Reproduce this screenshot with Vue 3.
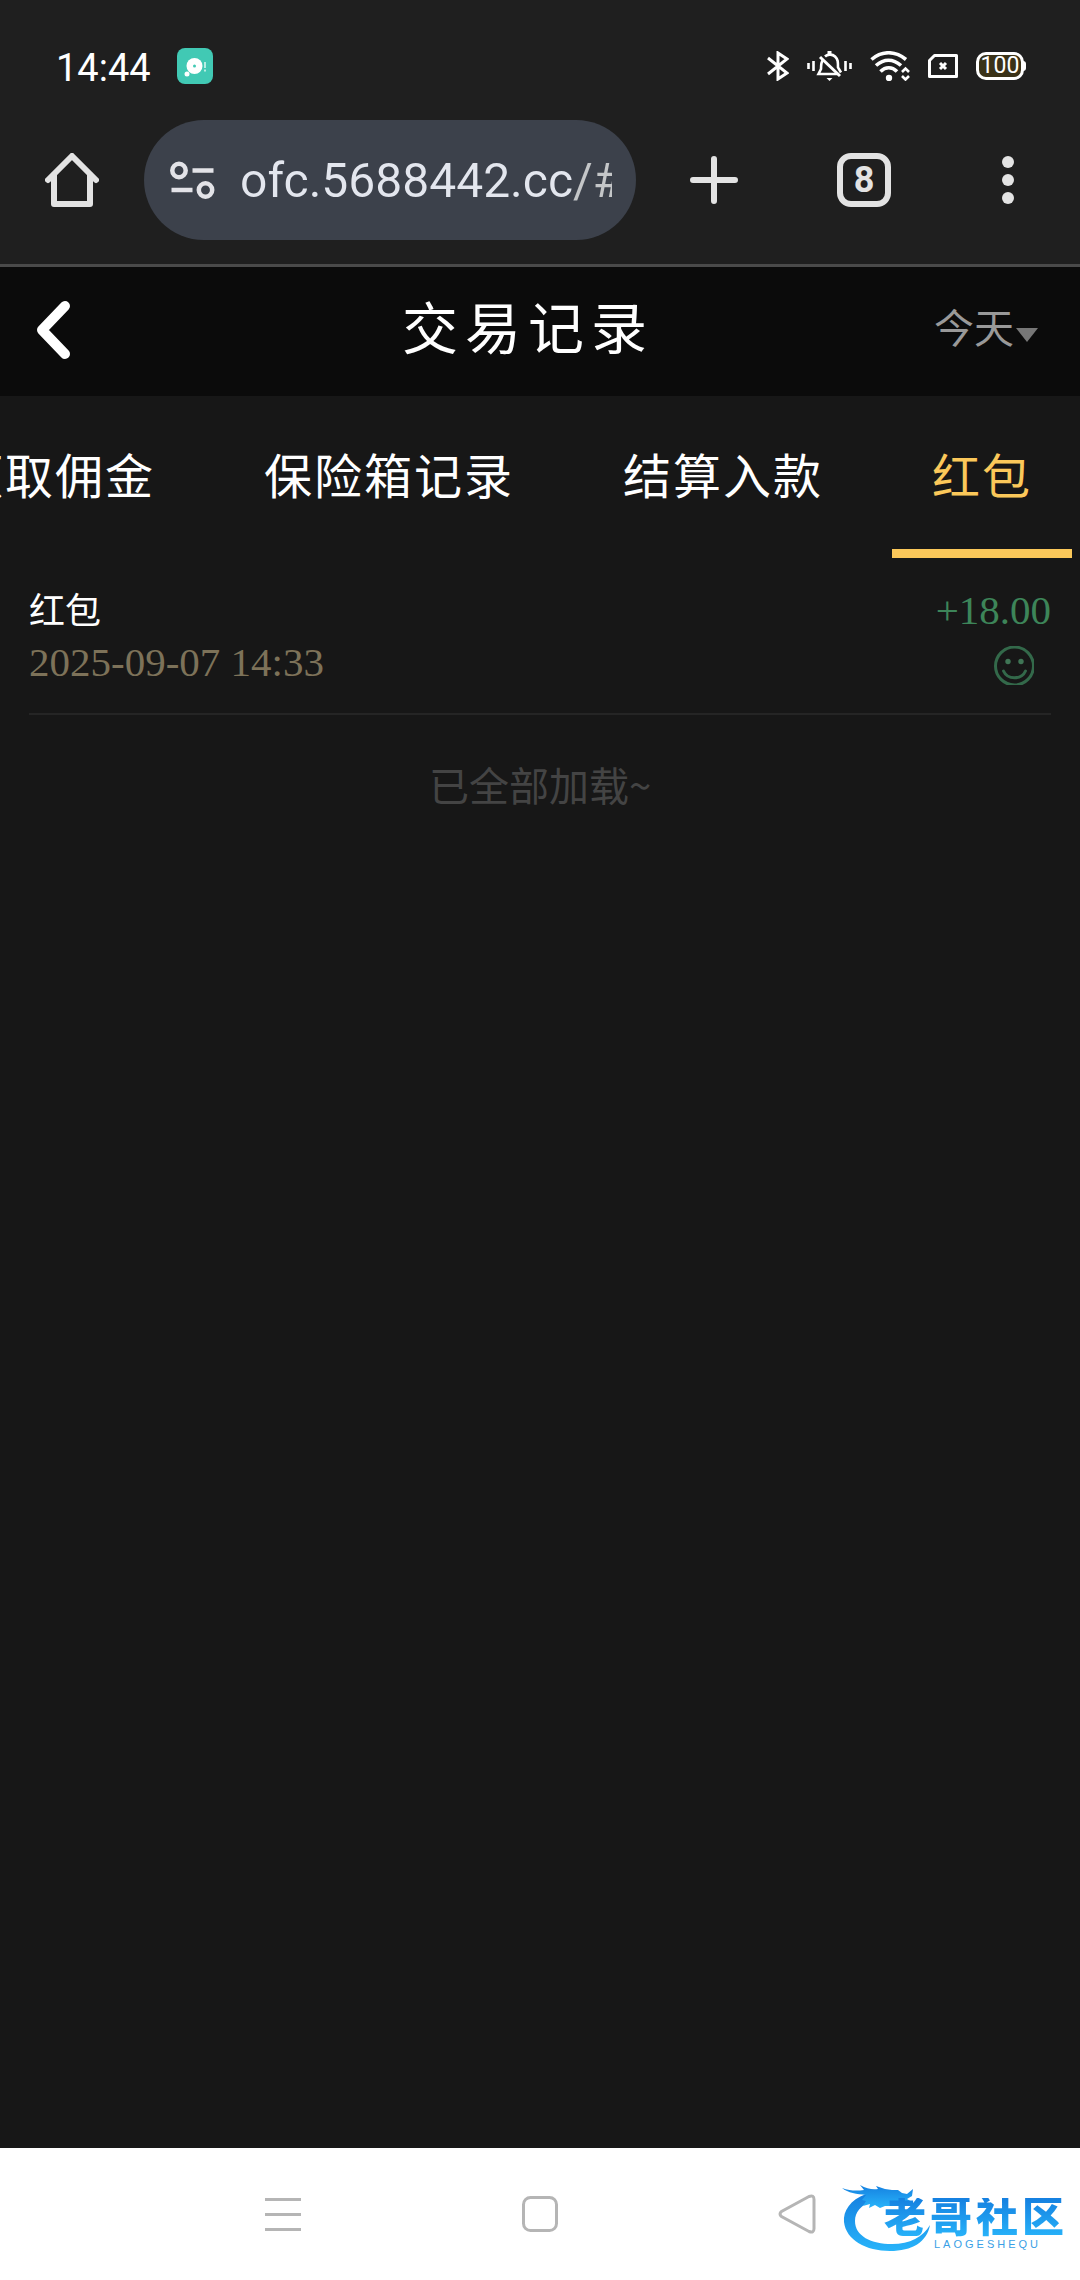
<template>
  <div class="screen">
    <header class="browser">
      <div class="status-bar">
        <div class="status-left">
          <time class="clock">14:44</time>
          <svg class="app-badge" width="36" height="36" viewBox="0 0 36 36">
            <rect width="36" height="36" rx="8" fill="#41c9b4" />
            <circle cx="17.500" cy="18" r="8" fill="#fff" />
            <circle cx="17.500" cy="18" r="1.500" fill="#41c9b4" />
            <circle cx="10" cy="26" r="2.500" fill="#fff" />
            <path d="M28 14v6M28 21.500v2" stroke="#d5f5ef" stroke-width="1.600" />
          </svg>
        </div>

        <div class="status-right">
          <!-- Bluetooth -->
          <svg width="22" height="30" viewBox="0 0 22 30" fill="none" stroke="#fff" stroke-width="3">
            <path d="M1 7l19 15-9 6V2l9 6L1 23" />
          </svg>

          <!-- Stumm / Vibration -->
          <svg width="45" height="30" viewBox="0 0 45 30" fill="none" stroke="#fff" stroke-width="2.600">
            <path d="M1.500 12v6M6.500 10v10M38.500 10v10M43.500 12v6" />
            <path d="M16 9c-2 2-2 5-2 9l-2.500 5H31M18 5.500c2-2 7-3 10 0 3 3 3 5 3 11l3 5" />
            <path d="M13 6l20 19" stroke-width="3" />
            <path d="M22.500 0v3" stroke-width="4" />
            <path d="M19.500 27h6l-3 3z" fill="#fff" stroke="none" />
          </svg>

          <!-- WLAN -->
          <svg width="40" height="30" viewBox="0 0 40 30" fill="none" stroke="#fff" stroke-width="3.600">
            <path d="M1.500 8.500C12-.500 25-.500 36 8.500" />
            <path d="M6 14.500c8-7 17-7 25 0" />
            <path d="M10.500 20.500c5-5 11.500-5 16.500 0" />
            <circle cx="19" cy="27" r="3.200" fill="#fff" stroke="none" />
            <path d="M32 21l3.500-3.500L39 21M32 25l3.500 3.500L39 25" stroke-width="2.600" />
          </svg>

          <!-- Keine SIM-Karte -->
          <svg width="30" height="24" viewBox="0 0 30 24" fill="none" stroke="#fff" stroke-width="3">
            <path d="M6.500 1.500h22v21h-27v-16z" stroke-linejoin="round" />
            <path d="M12 9l6 6M18 9l-6 6" />
          </svg>

          <div class="battery"><span>100</span></div>
        </div>
      </div>

      <div class="toolbar">
        <button class="tool home" aria-label="Home">
          <svg width="54" height="54" viewBox="0 0 54 54" fill="none" stroke="#e3e3e3" stroke-width="6" stroke-linecap="round" stroke-linejoin="round">
            <path d="M3 27L27 3l24 24" />
            <path d="M9 22v29h36V22" />
          </svg>
        </button>

        <div class="address">
          <svg width="45" height="39" viewBox="0 0 45 39" fill="none" stroke="#e3e3e8" stroke-width="4.500">
            <circle cx="9" cy="9.500" r="6.700" />
            <path d="M22.500 9.500h21M1.500 29h21" />
            <circle cx="35.500" cy="29" r="6.700" />
          </svg>
          <input v-model="url" type="text" aria-label="URL" spellcheck="false" />
        </div>

        <button class="tool new-tab" aria-label="New tab">
          <svg width="48" height="48" viewBox="0 0 48 48" stroke="#e3e3e3" stroke-width="6" stroke-linecap="round">
            <path d="M24 3v42M3 24h42" />
          </svg>
        </button>

        <button class="tool">
          <span class="tab-count">8</span>
        </button>

        <button class="tool" aria-label="Menu">
          <svg width="12" height="48" viewBox="0 0 12 48" fill="#e3e3e3">
            <circle cx="6" cy="6" r="6" />
            <circle cx="6" cy="24" r="6" />
            <circle cx="6" cy="42" r="6" />
          </svg>
        </button>
      </div>
    </header>

    <div class="page-header">
      <button class="back-button" aria-label="返回">
        <svg width="36" height="60" viewBox="0 0 36 60" fill="none" stroke="#fff" stroke-width="10" stroke-linecap="round" stroke-linejoin="round">
          <path d="M29 6L6 30l23 24" />
        </svg>
      </button>

      <h1>交易记录</h1>

      <label class="day-filter">
        <select v-model="day" aria-label="日期">
          <option value="today">今天</option>
        </select>
        <svg width="22" height="14" viewBox="0 0 22 14">
          <path d="M0 0h22L11 14z" fill="#777" />
        </svg>
      </label>
    </div>

    <nav class="tabs">
      <button
        v-for="tab in tabs"
        :key="tab"
        class="tab"
        :class="{ active: tab === activeTab }"
        @click="activeTab = tab"
      >
        {{ tab }}
      </button>
    </nav>

    <main class="records">
      <article v-for="record in records" :key="record.time" class="record">
        <div class="record-info">
          <h2>{{ record.type }}</h2>
          <time>{{ record.time }}</time>
        </div>

        <div class="record-result">
          <strong>{{ record.amount }}</strong>
          <svg width="40" height="39" viewBox="0 0 40 39" fill="none" stroke="#33694a" stroke-width="3">
            <circle cx="20.500" cy="20" r="19" />
            <circle cx="14" cy="15.500" r="2.700" fill="#3f7555" stroke="none" />
            <circle cx="27" cy="15.500" r="2.700" fill="#3f7555" stroke="none" />
            <path d="M9.500 25c4 9 18 9 22 0" stroke-linecap="round" />
          </svg>
        </div>
      </article>

      <p class="end-note">已全部加载~</p>
    </main>

    <footer class="system-nav">
      <button aria-label="Recent apps">
        <svg width="36" height="36" viewBox="0 0 36 36" stroke="#b5b5b5" stroke-width="3">
          <path d="M0 3.500h36M0 18.500h36M0 33.500h36" />
        </svg>
      </button>
      <button aria-label="Home screen">
        <svg width="36" height="36" viewBox="0 0 36 36" fill="none" stroke="#b5b5b5" stroke-width="3">
          <rect x="1.500" y="1.500" width="33" height="33" rx="7" />
        </svg>
      </button>
      <button aria-label="Back">
        <svg width="38" height="40" viewBox="0 0 38 40" fill="none" stroke="#b5b5b5" stroke-width="3">
          <path d="M31 2.500L3.500 17.500q-3 2.500 0 5L31 37.500q5 2 5-3v-29q0-5-5-3z" />
        </svg>
      </button>

      <div class="watermark">
        <svg class="dragon" width="92" height="70" viewBox="0 0 92 70">
          <defs>
            <linearGradient id="dragon-blue" x1="0" y1="0" x2="0" y2="1">
              <stop offset="0" stop-color="#1580e0" />
              <stop offset="1" stop-color="#28b4fa" />
            </linearGradient>
          </defs>
          <g fill="url(#dragon-blue)">
            <path d="M24 10C8 16 1 27 2 38c2 18 22 29 46 29 22 0 37-9 40-26-7 12-20 19-38 19C29 60 13 52 13 37c0-9 6-15 15-20z" />
            <path d="M0 4c8 3 15 3 22 2L18 1c7 4 13 5 18 4l-2-3 9 3 7 1 6 0 4 3 5 1 6-5-1 7-5 3 5 3-6 3-9-2-6 3-6 0-5 2-5-3-6 3 1-4-7 2 3-5-4-1 4-5C15 10 6 9 0 4z" />
          </g>
        </svg>
        <div class="watermark-text">
          <b>老哥社区</b>
          <small>LAOGESHEQU</small>
        </div>
      </div>
    </footer>
  </div>
</template>

<script setup>
import { ref } from 'vue'

const url = ref('ofc.5688442.cc/#/')
const day = ref('today')

// Die Leiste ist ganz nach rechts gescrollt, der erste Tab ist links angeschnitten
const tabs = ['领取佣金', '保险箱记录', '结算入款', '红包']
const activeTab = ref('红包')

const records = [{ type: '红包', time: '2025-09-07 14:33', amount: '+18.00' }]
</script>

<style>
body {
  margin: 0;
  background: #171717;
}
</style>

<style scoped>
.screen {
  min-height: 100vh;

  display: flex;
  flex-direction: column;
  overflow: hidden;

  background: #171717;
  color: white;
  font-family: Roboto, 'Noto Sans CJK SC', sans-serif;
}

svg {
  display: block;
  flex-shrink: 0;
}

button {
  padding: 0;
  border: none;
  background: transparent;
  color: inherit;
  font-family: inherit;
  cursor: pointer;
}

.browser {
  border-bottom: 3px solid #4a4a4a;
  background: #1f1f1f;
}

.status-bar {
  height: 108px;
  padding: 12px 54px 0 56px;

  display: flex;
  align-items: center;
  justify-content: space-between;
}

.status-left,
.status-right {
  display: flex;
  align-items: center;
}

.status-left {
  gap: 26px;
}

.status-right {
  gap: 18px;
}

.clock {
  padding-top: 4px;

  font-size: 38px;
}

.battery {
  box-sizing: border-box;
  position: relative;
  width: 48px;
  height: 28px;
  margin-right: 2px;

  border: 3px solid #fff;
  border-radius: 10px;
  background: #3a3218;

  display: flex;
  align-items: center;
  justify-content: center;

  font-size: 23px;
  line-height: 22px;
}

.battery::after {
  content: '';
  position: absolute;
  top: 6px;
  right: -5px;
  width: 3px;
  height: 10px;
  border-radius: 0 3px 3px 0;
  background: #fff;
}

.toolbar {
  padding-bottom: 24px;

  display: flex;
  align-items: center;
}

.tool {
  width: 144px;
  height: 120px;

  display: flex;
  align-items: center;
  justify-content: center;
}

.new-tab {
  width: 156px;
}

.address {
  box-sizing: border-box;
  flex: 1;
  min-width: 0;
  height: 120px;
  padding: 0 24px 0 26px;

  border-radius: 60px;
  background: #3c414b;

  display: flex;
  align-items: center;
  gap: 25px;
}

.address input {
  flex: 1;
  min-width: 0;
  padding: 2px 0 0;

  border: none;
  outline: none;

  /* Der Pfad hinter der Domain ist etwas dunkler */
  background: linear-gradient(90deg, #e3e6ee 334px, #c4c6c8 334px);
  background-clip: text;
  -webkit-text-fill-color: transparent;

  font-family: Roboto, sans-serif;
  font-size: 48px;
  line-height: 64px;
}

.tab-count {
  box-sizing: border-box;
  width: 54px;
  height: 54px;

  border: 6px solid #e3e3e3;
  border-radius: 14px;

  color: #e3e3e3;
  font-size: 36px;
  font-weight: 700;
  line-height: 42px;
}

.page-header {
  height: 125px;
  padding: 0 42px 4px 18px;

  display: grid;
  grid-template-columns: 1fr auto 1fr;
  align-items: center;

  background: #0b0b0b;
}

.back-button {
  justify-self: start;
  padding: 18px;
}

.page-header h1 {
  margin: 0;

  font-size: 56px;
  font-weight: 400;
  line-height: 80px;
  letter-spacing: 7px;
}

.day-filter {
  justify-self: end;

  display: flex;
  align-items: center;
  gap: 2px;
}

.day-filter select {
  padding: 0;
  border: none;
  appearance: none;

  background: transparent;
  color: #999;
  font-family: inherit;
  font-size: 40px;
}

.day-filter svg {
  margin-top: 10px;
}

.tabs {
  height: 162px;
  padding-right: 8px;

  display: flex;
  justify-content: flex-end;
  gap: 29px;
}

.tab {
  flex-shrink: 0;
  padding: 0 40px;
  border-bottom: 9px solid transparent;

  font-size: 48px;
  letter-spacing: 2px;
  white-space: nowrap;
}

.tab.active {
  border-color: #fbc85a;
  color: #fbc85a;
}

.records {
  flex: 1;
  padding: 0 29px;
}

.record {
  padding: 28px 0 23px;
  border-bottom: 2px solid #252525;

  display: flex;
  justify-content: space-between;
}

.record h2 {
  margin: 0;

  font-size: 36px;
  font-weight: 400;
  line-height: 52px;
}

.record time,
.record strong {
  display: block;

  font-family: 'Liberation Serif', serif;
  font-size: 41px;
  font-weight: 400;
  line-height: 48px;
}

.record time {
  padding-bottom: 4px;

  color: #7d7259;
}

.record strong {
  color: #3d8559;
}

.record-result {
  display: flex;
  flex-direction: column;
  align-items: flex-end;
}

.record-result svg {
  margin: 12px 17px 0 0;
}

.end-note {
  margin: 40px 0 0;

  color: #444;
  font-family: 'Noto Sans CJK SC', sans-serif;
  font-size: 40px;
  line-height: 58px;
  text-align: center;
}

.system-nav {
  position: relative;
  height: 132px;
  padding: 0 154px;

  display: grid;
  grid-template-columns: repeat(3, 1fr);

  background: #fff;
}

.system-nav button {
  display: flex;
  align-items: center;
  justify-content: center;
}

/* Logo liegt über der Navigationsleiste */
.watermark {
  position: absolute;
  right: 12px;
  bottom: 30px;
}

.dragon {
  position: absolute;
  left: -42px;
  bottom: -4px;
}

.watermark-text {
  position: relative;

  display: flex;
  flex-direction: column;
}

.watermark b {
  background: linear-gradient(#1580e0, #28b4fa);
  background-clip: text;
  color: transparent;

  font-size: 42px;
  font-weight: 900;
  line-height: 40px;
  letter-spacing: 4px;
}

.watermark small {
  padding-left: 50px;

  color: #3a9fe6;
  font-family: 'Liberation Sans', sans-serif;
  font-size: 11px;
  line-height: 12px;
  letter-spacing: 3px;
}
</style>
